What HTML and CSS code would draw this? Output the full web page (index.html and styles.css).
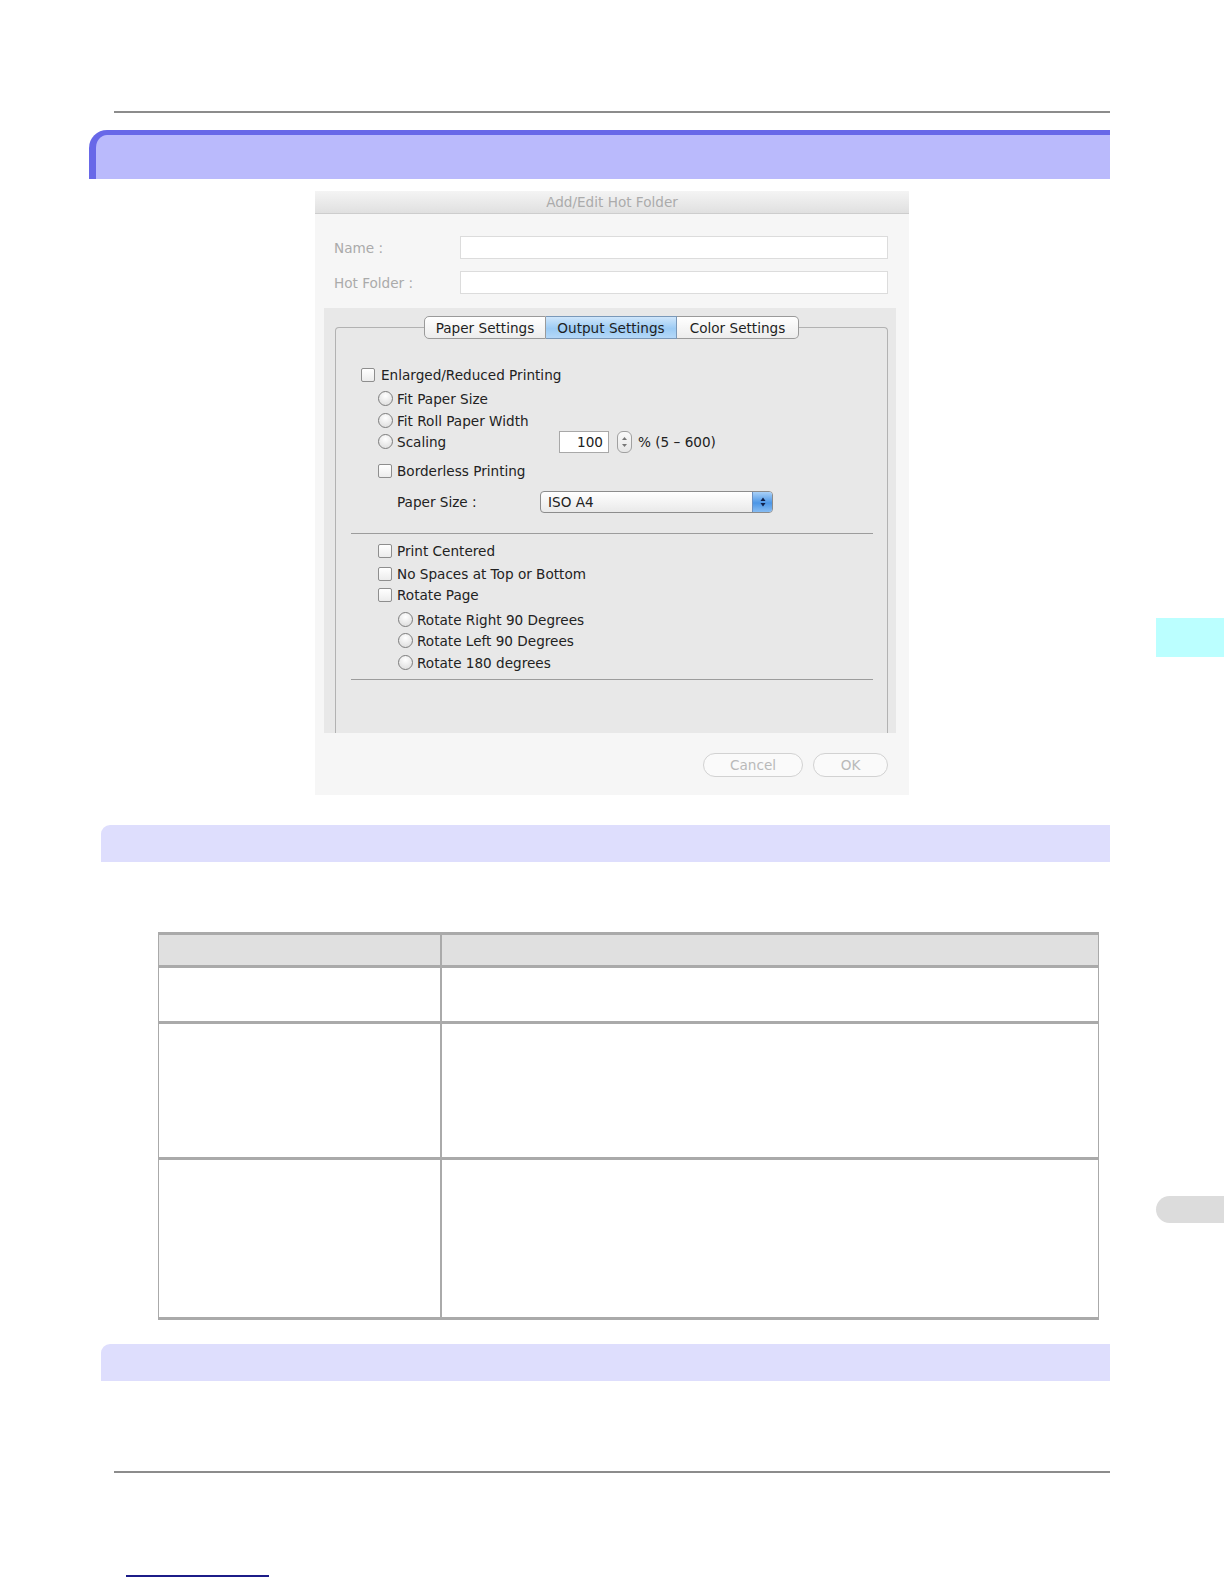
FILE: index.html
```html
<!DOCTYPE html>
<html lang="en">

<head>
    <meta charset="UTF-8">
    <meta name="viewport" content="width=device-width, initial-scale=1.0">
    <title>Add/Edit Hot Folder - Output Settings</title>
    <link rel="stylesheet" href="styles.css">
</head>

<body>

    <div class="page">

        <!-- Regua do topo -->
        <div class="rule"></div>

        <!-- Titulo da secao -->
        <div class="title-band"></div>

        <!-- Janela do dialogo -->
        <div class="dialog">
            <div class="dlg-title">Add/Edit Hot Folder</div>

            <div class="dlg-fields">
                <label class="dim">Name :</label>
                <div class="field"></div>
                <label class="dim">Hot Folder :</label>
                <div class="field"></div>
            </div>

            <div class="dlg-panel">
                <div class="group">
                    <div class="tabs">
                        <span class="tab">Paper Settings</span>
                        <span class="tab active">Output Settings</span>
                        <span class="tab">Color Settings</span>
                    </div>

                    <div class="row lvl1 r1"><span class="check"></span>Enlarged/Reduced Printing</div>
                    <div class="row lvl2 r2"><span class="radio"></span>Fit Paper Size</div>
                    <div class="row lvl2 r3"><span class="radio"></span>Fit Roll Paper Width</div>
                    <div class="row lvl2 r4">
                        <span class="radio"></span><span class="scale-label">Scaling</span>
                        <span class="num">100</span>
                        <span class="stepper">
                            <svg width="7" height="16" viewBox="0 0 7 16">
                                <path d="M1 6 L3.5 3 L6 6 Z" fill="#777" />
                                <path d="M1 10 L3.5 13 L6 10 Z" fill="#777" />
                            </svg>
                        </span>
                        <span class="range">% (5 – 600)</span>
                    </div>
                    <div class="row lvl2 r5"><span class="check"></span>Borderless Printing</div>
                    <div class="row lvl3 r6">
                        <span class="size-label">Paper Size :</span>
                        <span class="select">
                            <span class="select-text">ISO A4</span>
                            <span class="select-arrows">
                                <svg width="8" height="14" viewBox="0 0 8 14">
                                    <path d="M1.5 6 L4 2.5 L6.5 6 Z" fill="#10204a" />
                                    <path d="M1.5 8 L4 11.5 L6.5 8 Z" fill="#10204a" />
                                </svg>
                            </span>
                        </span>
                    </div>

                    <div class="sep sep1"></div>

                    <div class="row lvl2 r7"><span class="check"></span>Print Centered</div>
                    <div class="row lvl2 r8"><span class="check"></span>No Spaces at Top or Bottom</div>
                    <div class="row lvl2 r9"><span class="check"></span>Rotate Page</div>
                    <div class="row lvl4 r10"><span class="radio"></span>Rotate Right 90 Degrees</div>
                    <div class="row lvl4 r11"><span class="radio"></span>Rotate Left 90 Degrees</div>
                    <div class="row lvl4 r12"><span class="radio"></span>Rotate 180 degrees</div>

                    <div class="sep sep2"></div>
                </div>
            </div>

            <div class="dlg-buttons">
                <span class="btn btn-cancel">Cancel</span>
                <span class="btn btn-ok">OK</span>
            </div>
        </div>

        <!-- Subtitulo 1 -->
        <div class="sub-band band-a"></div>

        <!-- Tabela -->
        <table class="spec">
            <tr class="head">
                <th class="col1"></th>
                <th></th>
            </tr>
            <tr class="row-short">
                <td></td>
                <td></td>
            </tr>
            <tr class="row-mid">
                <td></td>
                <td></td>
            </tr>
            <tr class="row-tall">
                <td></td>
                <td></td>
            </tr>
        </table>

        <!-- Subtitulo 2 -->
        <div class="sub-band band-b"></div>

        <!-- Regua do rodape -->
        <div class="rule rule-bottom"></div>

        <div class="foot-link"></div>

        <!-- Abas laterais -->
        <div class="side-tab side-current"></div>
        <div class="side-tab side-grey"></div>
    </div>

</body>

</html>
```

FILE: styles.css
```css
* {
    box-sizing: border-box;
}

body {
    margin: 0;
    background-color: #fff;
    font-family: "DejaVu Sans", "Liberation Sans", sans-serif;
    color: #222;
}

.page {
    position: relative;
    width: 1224px;
    height: 1584px;
    padding-top: 111px;
    overflow: hidden;
}

.rule {
    margin-left: 114px;
    width: 996px;
    height: 2px;
    background-color: #8c8c8c;
}

.title-band {
    margin-top: 17px;
    margin-left: 89px;
    width: 1021px;
    height: 49px;
    background-color: #babafc;
    border-top: 5px solid #6868e8;
    border-left: 7px solid #6868e8;
    border-top-left-radius: 18px;
}

/* dialogo */

.dialog {
    margin: 12px auto 0;
    width: 594px;
    height: 604px;
    background-color: #f6f6f6;
    font-size: 13.6px;
}

.dlg-title {
    height: 23px;
    line-height: 22px;
    text-align: center;
    color: #ababab;
    background: linear-gradient(#f4f4f4, #e0e0e0);
    border-bottom: 1px solid #cdcdcd;
}

.dlg-fields {
    display: grid;
    grid-template-columns: 126px 428px;
    row-gap: 12px;
    align-items: center;
    padding: 22px 0 0 19px;
}

.dim {
    color: #aaa;
}

.field {
    height: 23px;
    background-color: #fff;
    border: 1px solid #dcdcdc;
}

.dlg-panel {
    margin-top: 14px;
    margin-left: 9px;
    width: 572px;
    height: 425px;
    padding-top: 19px;
    background-color: #e8e8e8;
}

.group {
    margin-left: 11px;
    width: 553px;
    height: 406px;
    border: 1px solid #b2b2b2;
    border-bottom: none;
    border-radius: 4px 4px 0 0;
}

.tabs {
    display: flex;
    justify-content: center;
    margin-top: -12px;
    height: 23px;
}

.tab {
    display: flex;
    align-items: center;
    justify-content: center;
    width: 122px;
    height: 23px;
    background: linear-gradient(#ffffff, #ececec);
    border: 1px solid #9a9a9a;
    border-left: none;
    color: #1e1e1e;
}

.tab:first-child {
    border-left: 1px solid #9a9a9a;
    border-radius: 5px 0 0 5px;
}

.tab:last-child {
    border-radius: 0 5px 5px 0;
}

.tab.active {
    width: 131px;
    background: linear-gradient(#cfe6fb, #9ccbf4 55%, #b4d8f8);
    border-color: #7a98b8;
}

.row {
    display: flex;
    align-items: center;
    height: 21px;
    color: #222;
}

.lvl1 {
    padding-left: 25px;
}

.lvl2 {
    padding-left: 42px;
}

.lvl3 {
    padding-left: 61px;
}

.lvl4 {
    padding-left: 62px;
}

.r1 { margin-top: 25px; }
.r2 { margin-top: 3px; }
.r3 { margin-top: 1px; }
.r4 { margin-top: 0; }
.r5 { margin-top: 8px; }
.r6 { margin-top: 10px; height: 22px; }
.r7 { margin-top: 6px; }
.r8 { margin-top: 2px; }
.r9 { margin-top: 0; }
.r10 { margin-top: 4px; }
.r11 { margin-top: 0; }
.r12 { margin-top: 1px; }

.check {
    width: 14px;
    height: 14px;
    margin-right: 5px;
    border: 1px solid #8e8e8e;
    border-radius: 2px;
    background: linear-gradient(#ffffff, #ececec);
    flex-shrink: 0;
}

.lvl1 .check {
    margin-right: 6px;
}

.radio {
    width: 15px;
    height: 15px;
    margin-right: 4px;
    border: 1px solid #7c7c7c;
    border-radius: 50%;
    background: radial-gradient(circle at 50% 30%, #ffffff, #e4e4e4 70%);
    flex-shrink: 0;
}

.scale-label {
    width: 162px;
}

.num {
    width: 50px;
    height: 22px;
    line-height: 21px;
    text-align: right;
    padding-right: 5px;
    background-color: #fff;
    border: 1px solid #a8a8a8;
}

.stepper {
    display: flex;
    align-items: center;
    justify-content: center;
    width: 15px;
    height: 22px;
    margin-left: 8px;
    margin-right: 6px;
    border: 1px solid #a0a0a0;
    border-radius: 6px;
    background: linear-gradient(#fafafa, #e6e6e6);
}

.size-label {
    width: 143px;
}

.select {
    display: flex;
    align-items: center;
    width: 233px;
    height: 22px;
    border: 1px solid #8c8c8c;
    border-radius: 4px;
    background: linear-gradient(#ffffff, #e9e9e9);
    overflow: hidden;
}

.select-text {
    flex: 1;
    padding-left: 7px;
}

.select-arrows {
    display: flex;
    align-items: center;
    justify-content: center;
    width: 20px;
    height: 100%;
    border-left: 1px solid #6b8fc0;
    background: linear-gradient(#a8d0f8, #4c96e6 55%, #86bcf3);
}

.sep {
    margin-left: 15px;
    width: 522px;
    height: 1px;
    background-color: #9c9c9c;
}

.sep1 {
    margin-top: 20px;
}

.sep2 {
    margin-top: 6px;
}

.dlg-buttons {
    display: flex;
    justify-content: flex-end;
    gap: 10px;
    margin-top: 20px;
    padding-right: 21px;
}

.btn {
    display: flex;
    align-items: center;
    justify-content: center;
    height: 24px;
    border: 1px solid #d2d2d2;
    border-radius: 12px;
    background-color: #fafafa;
    color: #b9b9b9;
}

.btn-cancel {
    width: 100px;
}

.btn-ok {
    width: 75px;
}

/* faixas */

.sub-band {
    margin-left: 101px;
    width: 1009px;
    height: 37px;
    background-color: #dedefd;
    border-top-left-radius: 9px;
}

.band-a {
    margin-top: 30px;
}

.band-b {
    margin-top: 24px;
}

/* tabela */

.spec {
    margin-top: 70px;
    margin-left: 158px;
    width: 941px;
    border-collapse: collapse;
}

.spec th,
.spec td {
    padding: 0;
    border-top: 3px solid #aaa;
    border-bottom: 3px solid #aaa;
    border-left: 1px solid #aaa;
    border-right: 2px solid #aaa;
}

.spec th:last-child,
.spec td:last-child {
    border-right: 1px solid #aaa;
}

.spec .col1 {
    width: 282px;
}

.spec .head th {
    height: 33px;
    background-color: #e0e0e0;
}

.spec .row-short td {
    height: 56px;
}

.spec .row-mid td {
    height: 136px;
}

.spec .row-tall td {
    height: 160px;
}

.rule-bottom {
    margin-top: 90px;
}

.foot-link {
    margin-top: 102px;
    margin-left: 126px;
    width: 143px;
    height: 2px;
    background-color: #1c1c88;
}

/* abas laterais */

.side-tab {
    position: absolute;
    left: 1156px;
    width: 68px;
}

.side-current {
    top: 618px;
    height: 39px;
    background-color: #bbffff;
}

.side-grey {
    top: 1196px;
    height: 27px;
    background-color: #dcdcdc;
    border-radius: 14px 0 0 14px;
}
```
